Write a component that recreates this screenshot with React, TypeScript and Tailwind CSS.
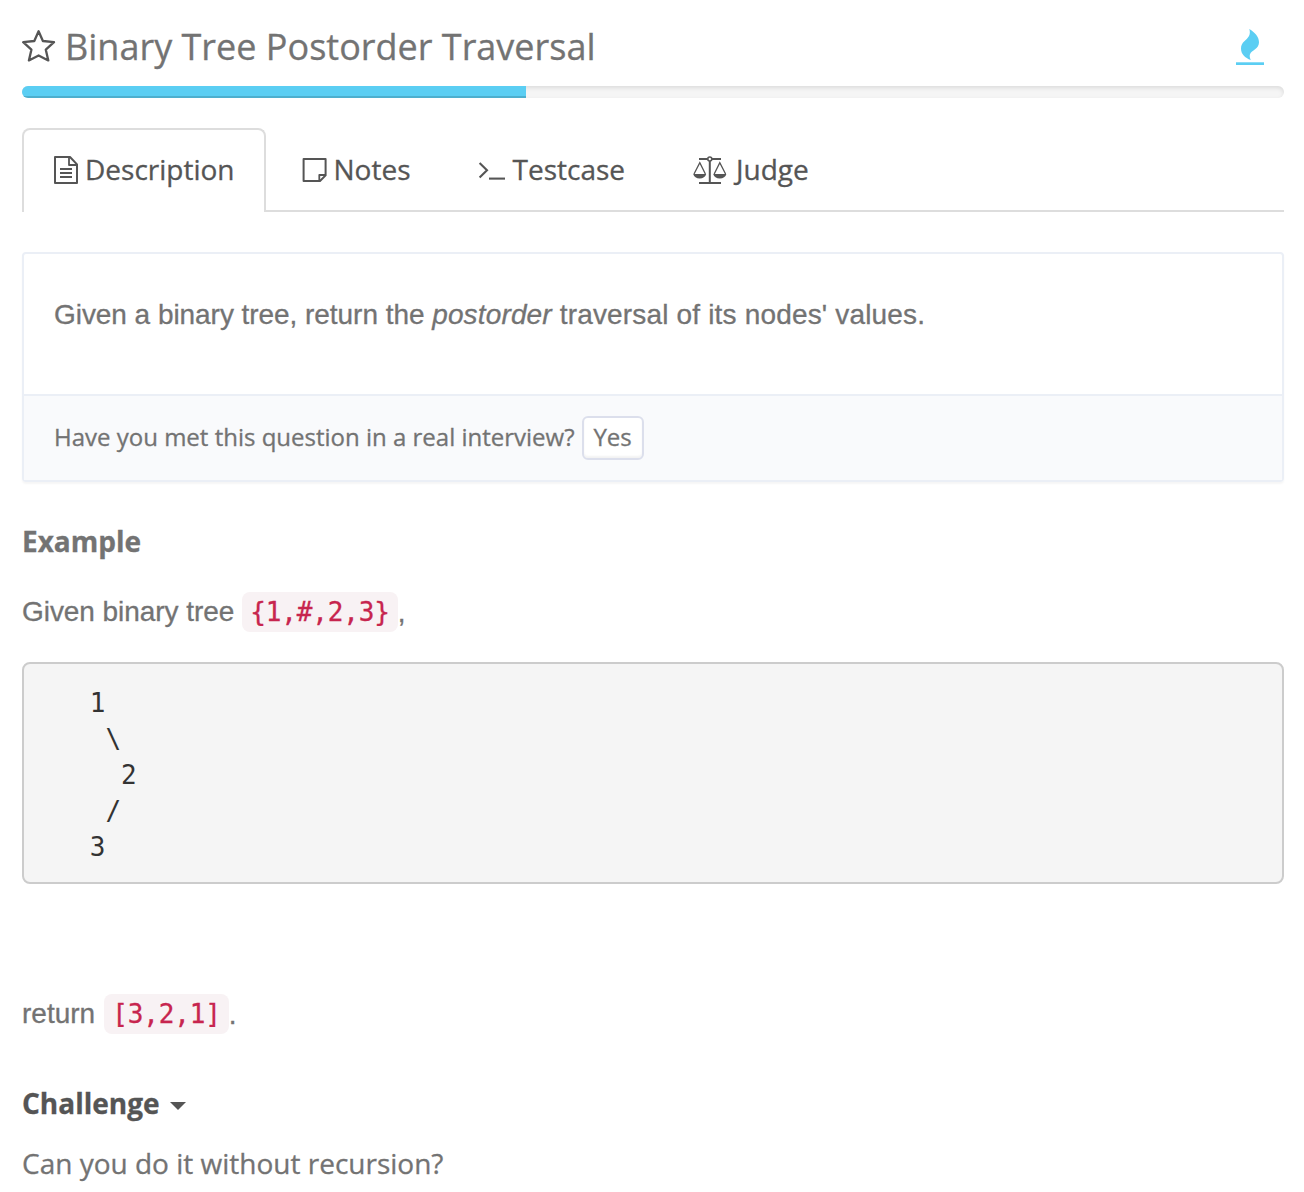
import type { ReactNode } from 'react';

function StarIcon() {
  return (
    <svg className="mb-0.5" width="34" height="34" viewBox="0 0 34 34" fill="none" stroke="#555" strokeWidth="2.3" strokeLinejoin="round">
      <path d="M16.6 2.2 L20.9 12 L32 13.2 L23.8 20.7 L26.3 31.4 L16.6 26.4 L6.9 31.4 L9.4 20.7 L1.2 13.2 L12.3 12 Z" />
    </svg>
  );
}

function FlameIcon() {
  return (
    <svg width="28" height="38" viewBox="0 0 28 38" fill="#5bcef3">
      <path d="M13.3 1 C18.8 4.6 23 8.6 23 14.2 C23 21 15.6 22 14 26.2 C13.4 28 13.8 29.6 14.8 32 C9 29.6 5 26.2 5 20.4 C5 14 10.6 12.4 13 8 C14.2 5.6 14 3.6 13.3 1 Z" />
      <rect x="0" y="34.3" width="28" height="2.7" />
    </svg>
  );
}

function DocumentIcon() {
  return (
    <svg className="mt-0.5" width="24" height="28" viewBox="0 0 24 28" fill="none" stroke="#555" strokeWidth="2" strokeLinejoin="round">
      <path d="M1 1 H16 L23 8.4 V27 H1 Z" />
      <path d="M15 1 V9 H23" strokeWidth="1.8" />
      <path d="M6 13 H18 M6 17 H18 M6 21 H18" strokeWidth="2" />
    </svg>
  );
}

function NoteIcon() {
  return (
    <svg className="mt-0.5" width="25" height="24" viewBox="0 0 25 24" fill="none" stroke="#555" strokeWidth="2" strokeLinejoin="round">
      <path d="M1.6 1 H23.6 V17.4 L18 23 H1.6 Z" />
      <path d="M17.3 23 V17 H23.3" strokeWidth="1.8" />
    </svg>
  );
}

function TerminalIcon() {
  return (
    <svg className="mt-1" width="27" height="18" viewBox="0 0 27 18" fill="none" stroke="#555" strokeWidth="2.1">
      <path d="M1.6 1 L9 8.3 L1.6 15.6" />
      <path d="M11 16.6 H27" />
    </svg>
  );
}

function ScalesIcon() {
  return (
    <svg className="mt-0.5" width="35" height="28" viewBox="0 0 35 28" fill="none" stroke="#555" strokeWidth="2">
      <circle cx="17.8" cy="3" r="2" strokeWidth="1.6" />
      <path d="M7 3 H15.6 M20 3 H29 M17.8 5 V27 M7 27 H29" />
      <path d="M2 18 L7.8 6.6 L13.4 18 M22.2 18 L27.8 6.6 L33.6 18" strokeWidth="1.3" />
      <path d="M1.2 18 H14.2 C13.4 21 11 22.4 7.7 22.4 C4.4 22.4 2 21 1.2 18 Z M21.2 18 H34.4 C33.6 21 31.2 22.4 27.8 22.4 C24.4 22.4 22 21 21.2 18 Z" fill="#555" stroke="none" />
    </svg>
  );
}

function Tab({ icon, label, gap, active }: { icon: ReactNode; label: string; gap: string; active?: boolean }) {
  return (
    <button
      className={`flex h-[84px] items-start rounded-t-lg border-2 border-b-0 pt-[19px] pr-[29px] pl-[30px] ${
        active ? 'border-[#ddd] bg-white' : 'border-transparent'
      }`}
    >
      <span className={`flex h-10 items-center ${gap}`}>
        {icon}
        <span className="text-[28px] leading-10">{label}</span>
      </span>
    </button>
  );
}

function Code({ children }: { children: ReactNode }) {
  return (
    <code className="inline-block h-10 rounded-lg bg-[#f8f2f4] px-2 font-['DejaVu_Sans_Mono',monospace] text-[26px] leading-[41px] tracking-[-0.15px] text-[#c7254e]">
      {children}
    </code>
  );
}

const tree = ['   1', '    \\', '     2', '    /', '   3'].join('\n');

export default function App() {
  return (
    <main className="h-[1192px] overflow-hidden bg-white pt-[22px] pr-5 pl-[22px] font-['Open_Sans',sans-serif] text-[#737373] [-webkit-text-stroke:0.3px]">
      <header className="flex h-[50px] items-center justify-between pr-5">
        <div className="flex items-center gap-[9px]">
          <StarIcon />
          <h1 className="text-[36px] leading-[50px]">Binary Tree Postorder Traversal</h1>
        </div>
        <FlameIcon />
      </header>

      <div className="mt-3.5 h-3 overflow-hidden rounded-full bg-[#f5f5f5] shadow-[inset_0_2px_4px_rgba(0,0,0,0.1)]">
        <div className="h-full w-[504px] bg-[#5bcef3] shadow-[inset_0_-2px_0_rgba(0,0,0,0.15)]" />
      </div>

      <nav className="mt-[30px] flex h-[84px] gap-1 text-[#555]">
        <Tab active icon={<DocumentIcon />} label="Description" gap="gap-[7px]" />
        <div className="-ml-1 flex flex-1 gap-1 border-b-2 border-[#ddd] pl-1">
          <Tab icon={<NoteIcon />} label="Notes" gap="gap-[7px]" />
          <Tab icon={<TerminalIcon />} label="Testcase" gap="gap-2" />
          <Tab icon={<ScalesIcon />} label="Judge" gap="gap-[9px]" />
        </div>
      </nav>

      <section className="mt-10 rounded border-2 border-[#ebeff6] shadow-[0_2px_2px_rgba(0,0,0,0.04)]">
        <div className="h-[140px] px-[30px] pt-[41px]">
          <p className="font-['Liberation_Sans',sans-serif] text-[28px] leading-10 tracking-[0.17px]">
            <span className="tracking-[-0.05px]">Given a binary tree, return the </span>
            <em className="tracking-[0.15px]">postorder</em> traversal of its nodes&#39; values.
          </p>
        </div>
        <div className="flex h-[86px] items-center gap-[7px] border-t-2 border-[#ebeff6] bg-[#f9fafc] px-[30px]">
          <p className="pb-[3px] text-2xl leading-10">Have you met this question in a real interview?</p>
          <button className="h-11 w-[62px] rounded-md border-2 border-[#dcdfec] bg-white pb-[3px] text-2xl leading-[37px] shadow-[inset_0_-2px_2px_rgba(0,0,0,0.05)]">
            Yes
          </button>
        </div>
      </section>

      <h2 className="mt-[39px] text-[28px] leading-10 font-bold">Example</h2>
      <p className="mt-[31px] flex h-10 items-center gap-2 font-['Liberation_Sans',sans-serif] text-[28px] leading-[42px]">
        <span className="tracking-[-0.06px]">Given binary tree</span>
        <span className="flex h-10">
          <Code>{'{1,#,2,3}'}</Code>,
        </span>
      </p>
      <pre className="mt-[30px] h-[222px] rounded-lg border-2 border-[#ccc] bg-[#f5f5f5] px-[19px] pt-[21px] font-['DejaVu_Sans_Mono',monospace] text-[26px] leading-9 tracking-[-0.05px] text-[#333] [-webkit-text-stroke:0]">
        {tree}
      </pre>

      <p className="mt-[110px] flex h-10 items-center gap-[9px] font-['Liberation_Sans',sans-serif] text-[28px] leading-[42px]">
        return
        <span className="flex h-10">
          <Code>[3,2,1]</Code>.
        </span>
      </p>

      <h2 className="mt-[49px] flex items-center gap-2.5 text-[28px] leading-10 font-bold text-[#555]">
        Challenge
        <svg width="16" height="8" viewBox="0 0 16 8" fill="#555" className="mt-1.5">
          <path d="M0 0 H16 L8 8 Z" />
        </svg>
      </h2>
      <p className="mt-5 text-[28px] leading-10">Can you do it without recursion?</p>
    </main>
  );
}
